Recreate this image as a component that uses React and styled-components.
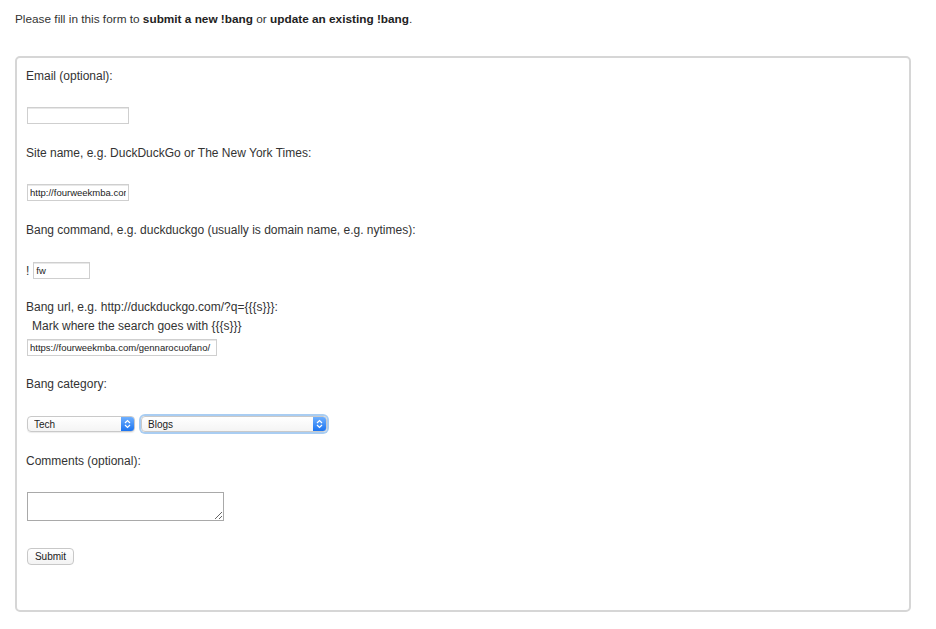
import React from "react";
import styled, { createGlobalStyle } from "styled-components";

const GlobalStyle = createGlobalStyle`
  html, body { margin: 0; padding: 0; background: #fff; }
  body { font-family: "Liberation Sans", Arial, sans-serif; color: #333; }
`;

const Page = styled.div` padding: 11px 25px 0 15px; `;
const Intro = styled.p` margin: 0; font-size: 11.8px; line-height: 16px; color: #333; b { font-weight: bold; color: #222; } `;
const FormBox = styled.form` margin-top: 29px; width: 896px; box-sizing: border-box; border: 2px solid #d6d6d6; border-radius: 5px; padding: 9px 0 45px 9px; display: flex; flex-direction: column; align-items: flex-start; `;
const Field = styled.div` display: flex; flex-direction: column; align-items: flex-start; margin-bottom: ${(p) => p.$after ?? 20}px; `;
const Label = styled.label` font-size: 12px; line-height: 18px; color: #333; margin-bottom: ${(p) => p.$gap ?? 22}px; `;
const Note = styled.div` font-size: 12px; line-height: 18px; color: #333; padding-left: 6px; margin-bottom: 4px; `;
const TextInput = styled.input` box-sizing: border-box; width: ${(p) => p.$w}px; height: 17px; margin: 0 0 0 1px; padding: 0 2px; border: 1px solid #cfcfcf; box-shadow: inset 0 1px 0 #e8e8e8; font-family: "Liberation Sans", Arial, sans-serif; font-size: 9.5px; color: #222; outline: none; `;
const BangRow = styled.div` display: flex; align-items: center; gap: 3px; font-size: 12px; `;
const SelectRow = styled.div` display: flex; gap: 6px; margin-left: 1px; `;
const SelectBox = styled.div` display: flex; width: ${(p) => p.$w}px; height: 16px; box-sizing: border-box; border: 1px solid #c9c9c9; border-radius: 4px; overflow: hidden; background: linear-gradient(#fff, #f4f4f4); box-shadow: ${(p) => (p.$focus ? "0 0 0 2px #a9cdf2" : "0 1px 1px rgba(0,0,0,0.08)")}; `;
const NativeSelect = styled.select` flex: 1; appearance: none; -webkit-appearance: none; border: none; background: transparent; padding: 0 6px; font-family: "Liberation Sans", Arial, sans-serif; font-size: 10px; color: #222; outline: none; `;
const Arrow = styled.span` width: 13px; display: flex; align-items: center; justify-content: center; background: linear-gradient(#6fb0ff, #1a73f0); `;
const Comments = styled.textarea` box-sizing: border-box; width: 197px; height: 29px; margin: 0 0 0 1px; border: 1px solid #a9a9a9; resize: both; font-family: "Liberation Sans", Arial, sans-serif; `;
const SubmitButton = styled.button` margin-left: 1px; width: 47px; height: 17px; box-sizing: border-box; padding: 0; border: 1px solid #c8c8c8; border-radius: 4px; background: linear-gradient(#fff, #f3f3f3); font-family: "Liberation Sans", Arial, sans-serif; font-size: 10px; color: #222; `;

const Chevrons = () => (
  <svg width="7" height="10" viewBox="0 0 7 10">
    <path d="M1 4 L3.5 1.5 L6 4 M1 6 L3.5 8.5 L6 6" fill="none" stroke="#fff" strokeWidth="1.2" />
  </svg>
);

const Select = ({ w, focus, value }) => (
  <SelectBox $w={w} $focus={focus}>
    <NativeSelect defaultValue={value}>
      <option>{value}</option>
    </NativeSelect>
    <Arrow><Chevrons /></Arrow>
  </SelectBox>
);

export default function App() {
  return (
    <Page>
      <GlobalStyle />
      <Intro>
        Please fill in this form to <b>submit a new !bang</b> or <b>update an existing !bang</b>.
      </Intro>
      <FormBox>
        <Field>
          <Label>Email (optional):</Label>
          <TextInput $w={102} />
        </Field>
        <Field>
          <Label>Site name, e.g. DuckDuckGo or The New York Times:</Label>
          <TextInput $w={102} defaultValue="http://fourweekmba.com" />
        </Field>
        <Field $after={19}>
          <Label $gap={23}>Bang command, e.g. duckduckgo (usually is domain name, e.g. nytimes):</Label>
          <BangRow>! <TextInput $w={57} defaultValue="fw" /></BangRow>
        </Field>
        <Field $after={19}>
          <Label $gap={1}>Bang url, e.g. http://duckduckgo.com/?q={"{{{s}}}"}:</Label>
          <Note>Mark where the search goes with {"{{{s}}}"}</Note>
          <TextInput $w={190} defaultValue="https://fourweekmba.com/gennarocuofano/" />
        </Field>
        <Field>
          <Label $gap={23}>Bang category:</Label>
          <SelectRow>
            <Select w={108} value="Tech" />
            <Select w={186} value="Blogs" focus />
          </SelectRow>
        </Field>
        <Field $after={27}>
          <Label $gap={22}>Comments (optional):</Label>
          <Comments />
        </Field>
        <SubmitButton type="button">Submit</SubmitButton>
      </FormBox>
    </Page>
  );
}
